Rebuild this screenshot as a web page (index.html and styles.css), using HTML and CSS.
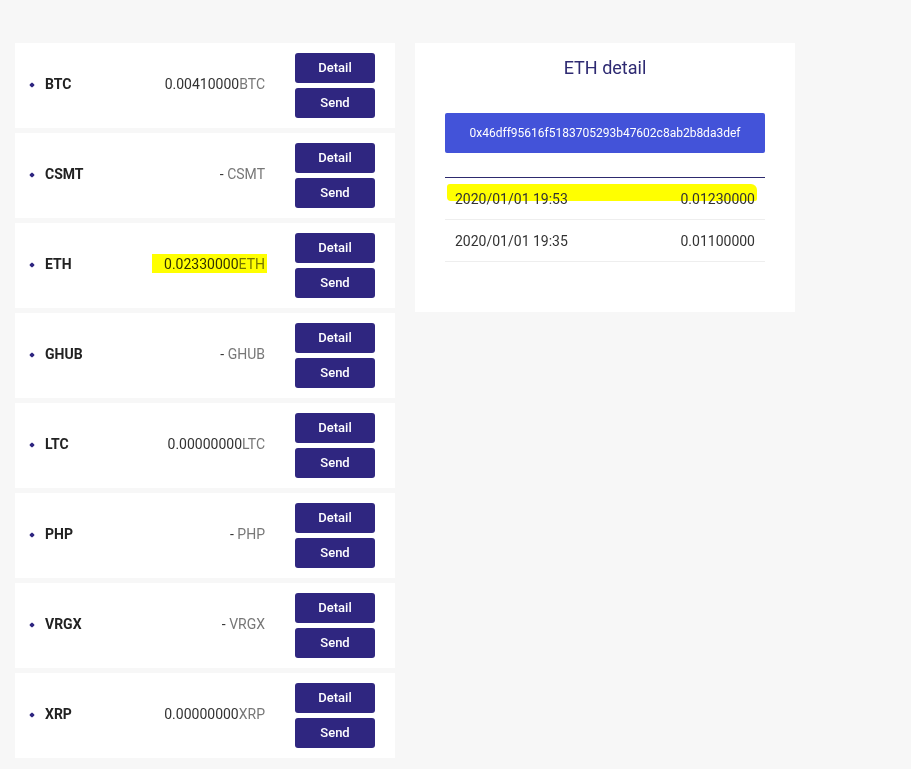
FILE: index.html
```html
<!DOCTYPE html>
<html>
<head>
<meta charset="utf-8">
<link rel="stylesheet" href="styles.css">
</head>
<body>
<div class="page">
  <div class="wallets">
    <div class="card"><span class="dot"></span><span class="sym">BTC</span><span class="amt">0.00410000<span class="unit">BTC</span></span><div class="btns"><button class="btn">Detail</button><button class="btn">Send</button></div></div>
    <div class="card"><span class="dot"></span><span class="sym">CSMT</span><span class="amt">- <span class="unit">CSMT</span></span><div class="btns"><button class="btn">Detail</button><button class="btn">Send</button></div></div>
    <div class="card"><span class="dot"></span><span class="sym">ETH</span><span class="amt">0.02330000<span class="unit">ETH</span><span class="mark mark-amt"></span></span><div class="btns"><button class="btn">Detail</button><button class="btn">Send</button></div></div>
    <div class="card"><span class="dot"></span><span class="sym">GHUB</span><span class="amt">- <span class="unit">GHUB</span></span><div class="btns"><button class="btn">Detail</button><button class="btn">Send</button></div></div>
    <div class="card"><span class="dot"></span><span class="sym">LTC</span><span class="amt">0.00000000<span class="unit">LTC</span></span><div class="btns"><button class="btn">Detail</button><button class="btn">Send</button></div></div>
    <div class="card"><span class="dot"></span><span class="sym">PHP</span><span class="amt">- <span class="unit">PHP</span></span><div class="btns"><button class="btn">Detail</button><button class="btn">Send</button></div></div>
    <div class="card"><span class="dot"></span><span class="sym">VRGX</span><span class="amt">- <span class="unit">VRGX</span></span><div class="btns"><button class="btn">Detail</button><button class="btn">Send</button></div></div>
    <div class="card"><span class="dot"></span><span class="sym">XRP</span><span class="amt">0.00000000<span class="unit">XRP</span></span><div class="btns"><button class="btn">Detail</button><button class="btn">Send</button></div></div>
  </div>
  <div class="detail">
    <h2 class="title">ETH detail</h2>
    <div class="address">0x46dff95616f5183705293b47602c8ab2b8da3def</div>
    <div class="txs">
      <div class="tx"><span class="mark mark-row"></span><span class="cell">2020/01/01 19:53</span><span class="cell">0.01230000</span></div>
      <div class="tx"><span class="cell">2020/01/01 19:35</span><span class="cell">0.01100000</span></div>
    </div>
  </div>
</div>
</body>
</html>
```

FILE: styles.css
```css
* { box-sizing: border-box; }
html, body { margin: 0; padding: 0; background: #f7f7f7; }
body { font-family: Roboto, "Noto Sans", sans-serif; color: #333; font-size: 14px; }
.page { display: flex; align-items: flex-start; gap: 20px; padding: 43px 0 0 15px; }
.wallets { width: 380px; display: flex; flex-direction: column; gap: 5px; }
.card { background: #fff; height: 85px; display: flex; align-items: center; padding: 0 20px 0 15px; }
.dot { width: 4px; height: 4px; background: #2e2580; border-radius: 1px; transform: rotate(45deg); margin-right: 11px; margin-bottom: 2px; }
.sym { font-weight: 700; color: #222; font-size: 14px; margin-bottom: 3px; }
.amt { margin-left: auto; margin-right: 30px; color: #333; position: relative; margin-bottom: 3px; }
.unit { color: #777; }
.btns { display: flex; flex-direction: column; gap: 5px; }
.btn { width: 80px; height: 30px; border: none; border-radius: 3px; background: #2f2680; color: #fff; font-family: Roboto, sans-serif; font-size: 13px; font-weight: 500; padding: 0 0 2px; }
.mark { position: absolute; background: #ffff00; mix-blend-mode: multiply; pointer-events: none; }
.mark-amt { left: -12px; right: -2px; top: -2px; bottom: -1px; }
.detail { width: 380px; background: #fff; padding: 14px 30px 50px; }
.title { margin: 0; text-align: center; font-weight: 400; font-size: 18px; color: #2e2a72; line-height: 22px; }
.address { margin-top: 34px; height: 40px; background: #4353d9; color: #fff; border-radius: 2px; display: flex; align-items: center; justify-content: center; font-size: 12px; padding-bottom: 1px; }
.txs { margin-top: 24px; border-top: 1px solid #2d2a6e; }
.tx { position: relative; display: flex; justify-content: space-between; height: 42px; align-items: center; padding: 0 10px; border-bottom: 1px solid #eee; color: #333; }
.cell { position: relative; }
.mark-row { left: 2px; width: 310px; top: 6px; height: 17px; border-radius: 3px 6px 2px 4px; }
```
